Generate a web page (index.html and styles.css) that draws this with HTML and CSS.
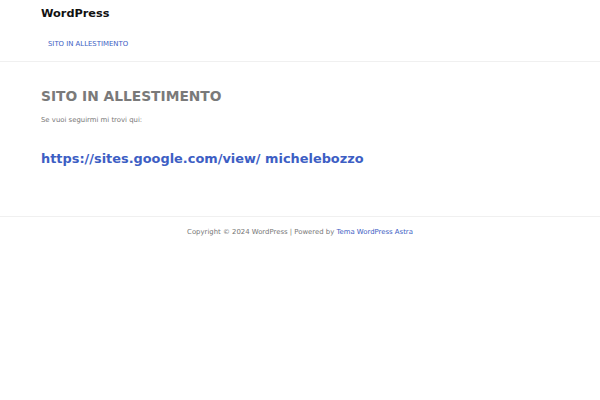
FILE: index.html
```html
<!DOCTYPE html>
<html lang="it">
<head>
  <meta charset="UTF-8" />
  <title>WordPress</title>
  <link rel="stylesheet" href="styles.css">
</head>
<body>
  <header class="site-header">
    <div class="container">
      <div class="site-title">WordPress</div>
      <nav class="main-nav">
        <a href="#">SITO IN ALLESTIMENTO</a>
      </nav>
    </div>
  </header>

  <main class="site-content">
    <div class="container">
      <h1 class="entry-title">SITO IN ALLESTIMENTO</h1>
      <p class="entry-text">Se vuoi seguirmi mi trovi qui:</p>
      <h2 class="entry-link"><a href="#">https://sites.google.com/view/ michelebozzo</a></h2>
    </div>
  </main>

  <footer class="site-footer">
    Copyright © 2024 WordPress | Powered by <a href="#">Tema WordPress Astra</a>
  </footer>
</body>
</html>
```

FILE: styles.css
```css
body {
  margin: 0;
  font-family: "DejaVu Sans", sans-serif;
  background-color: #fff;
  color: #555;
}

a {
  color: #3d5ec4;
  text-decoration: none;
}

.container {
  padding: 0 41px;
}

.site-header {
  border-bottom: 1px solid #f0f0f0;
}

.site-title {
  padding-top: 6px;
  font-size: 11.3px;
  font-weight: bold;
  color: #111;
  line-height: 15px;
}

.main-nav {
  padding: 18px 0 12px 7px;
  font-size: 6.9px;
  line-height: 10px;
}

.site-content {
  padding: 25px 0 48px;
}

.entry-title {
  margin: 0;
  font-size: 13.8px;
  line-height: 18px;
  color: #7a7a7a;
}

.entry-text {
  margin: 10px 0 0;
  font-size: 6.9px;
  line-height: 10px;
  color: #777;
}

.entry-link {
  margin: 25px 0 0;
  font-size: 12.9px;
  line-height: 18px;
}

.site-footer {
  border-top: 1px solid #f0f0f0;
  padding: 10px 0;
  text-align: center;
  font-size: 6.9px;
  line-height: 10px;
  color: #777;
}
```
